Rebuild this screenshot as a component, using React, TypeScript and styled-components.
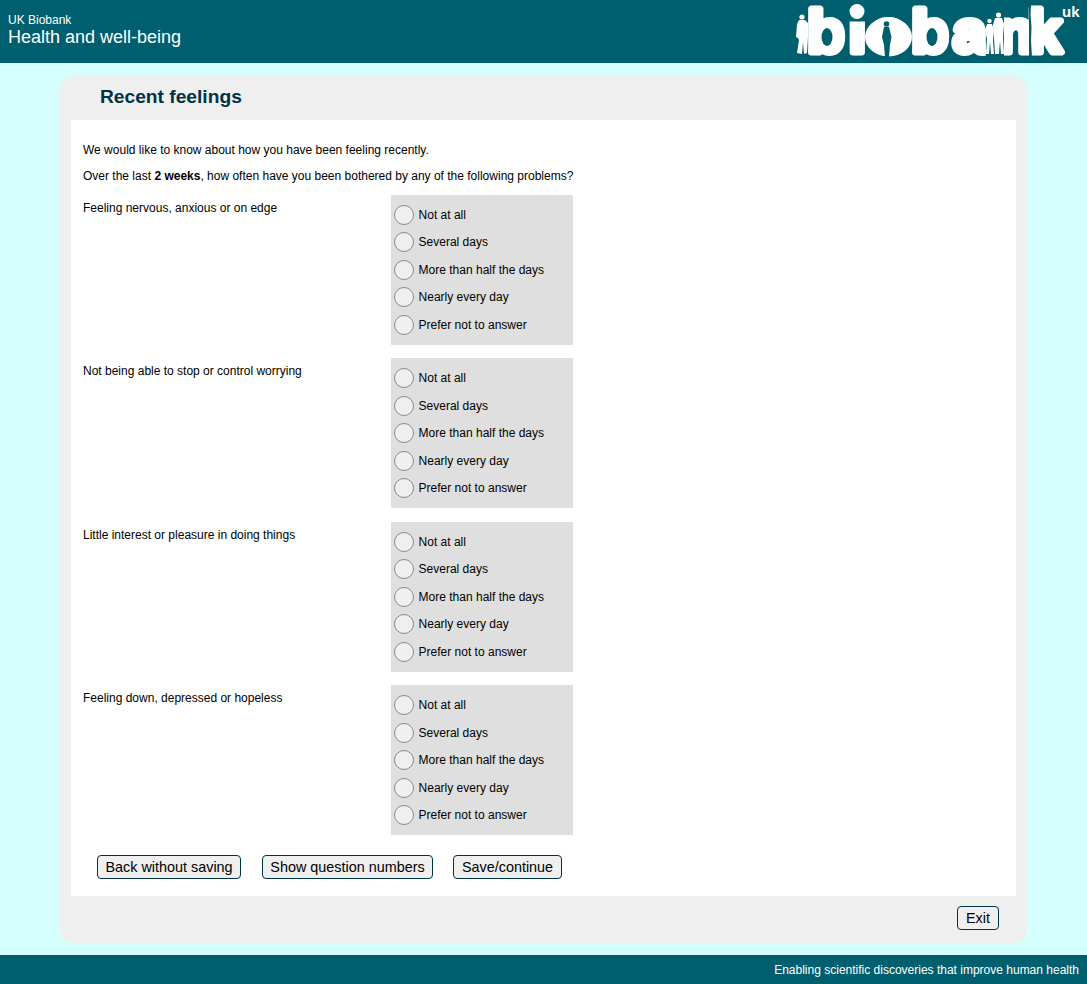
import * as React from 'react';
import styled, { createGlobalStyle } from 'styled-components';

const GlobalStyle = createGlobalStyle`
  html, body { margin: 0; padding: 0; }
  body {
    background: #d5ffff;
    font-family: "Liberation Sans", Arial, sans-serif;
    color: #000;
  }
`;

const Page = styled.div`
  display: flex;
  flex-direction: column;
  height: 984px;
  overflow: hidden;
`;

const Header = styled.header`
  height: 63px;
  flex: none;
  background: #005f6e;
  color: #fff;
  display: flex;
  justify-content: space-between;
`;

const HeaderTitles = styled.div`
  padding: 13px 0 0 8px;
`;

const Org = styled.div`
  font-size: 12px;
  line-height: 14px;
`;

const Section = styled.div`
  font-size: 18px;
  line-height: 21px;
`;

const LogoSvg = styled.svg`
  display: block;
  width: 307px;
  height: 63px;
  flex: none;
  overflow: visible;
`;

const Card = styled.main`
  flex: none;
  width: 967px;
  height: 867px;
  margin: 13px 0 12px 60px;
  background: #efefef;
  border-radius: 14px;
  display: flex;
  flex-direction: column;
`;

const Title = styled.h1`
  height: 44px;
  margin: 0;
  padding: 0 0 0 40px;
  font-size: 19.2px;
  line-height: 41px;
  font-weight: bold;
  color: #003344;
  flex: none;
`;

const Panel = styled.section`
  flex: none;
  height: 776px;
  margin: 0 11px;
  padding: 22.9px 12px 0;
  box-sizing: border-box;
  background: #fff;
`;

const Intro = styled.p`
  margin: 0 0 12px;
  font-size: 12px;
  line-height: 14px;
`;

const Question = styled.div`
  display: grid;
  grid-template-columns: 308px 182px;
  margin-bottom: 13.5px;
`;

const QuestionText = styled.div`
  font-size: 12px;
  line-height: 14px;
  padding-top: 6px;
`;

const Options = styled.div`
  background: #dfdfdf;
  height: 150px;
  padding: 6px 0 0 3px;
  box-sizing: border-box;
`;

const Option = styled.label`
  display: flex;
  align-items: center;
  height: 27.5px;
  font-size: 12px;
`;

const Radio = styled.input.attrs({ type: 'radio' })`
  appearance: none;
  width: 20px;
  height: 20px;
  margin: 0 4.6px 0 0;
  box-sizing: border-box;
  border: 1px solid #8a8a8a;
  border-radius: 50%;
  background: #efefef;
  flex: none;
`;

const Actions = styled.div`
  display: flex;
  padding: 6px 0 0 14px;
`;

const Button = styled.button<{ $width: number; $gap?: number }>`
  width: ${(p) => p.$width}px;
  height: 24px;
  padding: 0;
  margin-right: ${(p) => p.$gap ?? 0}px;
  font-family: inherit;
  font-size: 14.4px;
  color: #000;
  background: #efefef;
  border: 1px solid #003344;
  border-radius: 4px;
`;

const CardFooter = styled.div`
  flex: 1;
  display: flex;
  justify-content: flex-end;
  align-items: flex-start;
  padding: 10px 28px 0 0;
`;

const Footer = styled.footer`
  flex: none;
  height: 29px;
  background: #005f6e;
  color: #fff;
  font-size: 12px;
  line-height: 30px;
  text-align: right;
  padding-right: 8px;
`;

const answers = ['Not at all', 'Several days', 'More than half the days', 'Nearly every day', 'Prefer not to answer'];

const questions = [
  'Feeling nervous, anxious or on edge',
  'Not being able to stop or control worrying',
  'Little interest or pleasure in doing things',
  'Feeling down, depressed or hopeless',
];

function Logo() {
  return (
    <LogoSvg viewBox="780 0 307 63" aria-label="biobank uk">
      <text
        x="807.5 849 870 911.5 953 997 1028"
        y="51.5"
        fontFamily="'Liberation Sans', sans-serif"
        fontWeight="bold"
        fontSize="60"
        fill="#fff"
        stroke="#fff"
        strokeWidth="7"
        strokeLinejoin="round"
      >
        biobank
      </text>
      <text x="1062" y="16.5" fontFamily="'Liberation Sans', sans-serif" fontWeight="bold" fontSize="15" fill="#fff">
        uk
      </text>
      <g fill="#005f6e">
        {/* hide the font's i dot, it gets redrawn rounder below */}
        <path d="M846 0h20v21.5h-20z" />
        {/* counters of the two b */}
        <ellipse cx="827" cy="37" rx="5.5" ry="9" />
        <ellipse cx="932" cy="37" rx="5.5" ry="9" />
        {/* gap round the people, sliver at the k */}
        <path d="M986 10h18v47h-18z" />
        <path d="M1029 4l2 1-.5 10 1 12-.5 14 1 16h-3z" />
      </g>
      <g fill="#fff">
        <circle cx="857" cy="11.5" r="7.5" />
        <ellipse cx="888.5" cy="37" rx="23.5" ry="19.5" />
        {/* people beside the first b */}
        <circle cx="802" cy="17" r="2.6" />
        <path d="M799 20h6l3 3v14l-1 16-3 1-1-12-1 12-5-1 2-13-1-2-2-1 1-13z" />
        {/* people between a and n */}
        <circle cx="998.5" cy="15" r="2.6" />
        <path d="M995 18h7l2 6-1 13 1 17h-3l-1-13-1 13h-4l-1-16-1-13z" />
        <circle cx="989.5" cy="21" r="2.2" />
        <path d="M987 24h5l2 6-1 10 1 14h-3l-1-12-1 12h-3l1-15-2-9z" />
      </g>
      <g fill="#005f6e">
        {/* figure inside the o */}
        <circle cx="886.5" cy="24" r="2.8" />
        <path d="M884 27h5l2.5 10-1.5 8-1 12h-4l-1-12-2-8z" />
      </g>
    </LogoSvg>
  );
}

function App() {
  return (
    <Page>
      <GlobalStyle />
      <Header>
        <HeaderTitles>
          <Org>UK Biobank</Org>
          <Section>Health and well-being</Section>
        </HeaderTitles>
        <Logo />
      </Header>
      <Card>
        <Title>Recent feelings</Title>
        <Panel>
          <Intro>We would like to know about how you have been feeling recently.</Intro>
          <Intro>
            Over the last <b>2 weeks</b>, how often have you been bothered by any of the following problems?
          </Intro>
          {questions.map((q) => (
            <Question key={q}>
              <QuestionText>{q}</QuestionText>
              <Options>
                {answers.map((a) => (
                  <Option key={a}>
                    <Radio name={q} />
                    {a}
                  </Option>
                ))}
              </Options>
            </Question>
          ))}
          <Actions>
            <Button $width={144} $gap={21}>Back without saving</Button>
            <Button $width={171} $gap={20}>Show question numbers</Button>
            <Button $width={109}>Save/continue</Button>
          </Actions>
        </Panel>
        <CardFooter>
          <Button $width={42}>Exit</Button>
        </CardFooter>
      </Card>
      <Footer>Enabling scientific discoveries that improve human health</Footer>
    </Page>
  );
}

export default App;
